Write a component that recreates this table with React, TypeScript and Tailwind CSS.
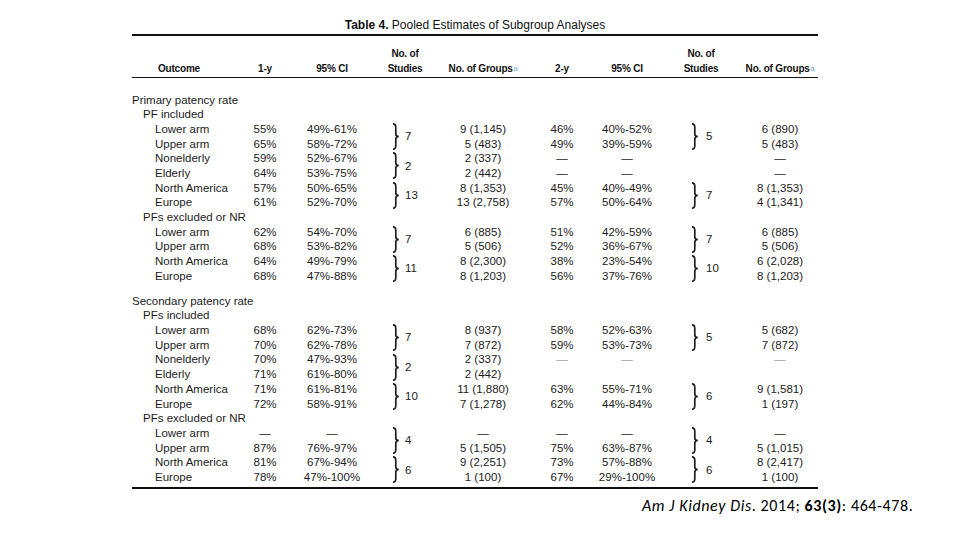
import React from "react";

type Row = { label: string; v: string[]; light?: boolean };
type PairT = { a: Row; b: Row; n1?: string; n2?: string };

const COLS = "grid grid-cols-[108px_50px_84px_62px_94px_64px_66px_82px_76px]";

const Brace = () => (
  <svg width="8" height="27" viewBox="0 0 8 27" className="shrink-0">
    <path
      d="M1 0.8 C3.6 0.8 3.8 2.2 3.8 4.5 L3.8 11 C3.8 12.5 4.6 13.4 6.8 13.5 C4.6 13.6 3.8 14.5 3.8 16 L3.8 22.5 C3.8 24.8 3.6 26.2 1 26.2"
      fill="none"
      stroke="#1f1f1f"
      strokeWidth="1.7"
    />
  </svg>
);

function Cell({ t, light }: { t: string; light?: boolean }) {
  const isDash = t === "—";
  return (
    <div className={`text-center whitespace-nowrap ${isDash && light ? "text-[#a0a0a0]" : ""}`}>{t}</div>
  );
}

function Pair({ p }: { p: PairT }) {
  const { a, b, n1, n2 } = p;
  return (
    <div className={`${COLS} auto-rows-[14.7px] leading-[14.7px]`}>
      <div className="pl-[23px] whitespace-nowrap">{a.label}</div>
      <Cell t={a.v[0]} />
      <Cell t={a.v[1]} />
      <div className="row-span-2 flex items-center pl-[18px]">
        {n1 && (
          <>
            <Brace />
            <span className="ml-[5px]">{n1}</span>
          </>
        )}
      </div>
      <Cell t={a.v[2]} />
      <Cell t={a.v[3]} light={a.light} />
      <Cell t={a.v[4]} light={a.light} />
      <div className="row-span-2 flex items-center pl-[31px]">
        {n2 && (
          <>
            <Brace />
            <span className="ml-[7px]">{n2}</span>
          </>
        )}
      </div>
      <Cell t={a.v[5]} light={a.light} />

      <div className="pl-[23px] whitespace-nowrap">{b.label}</div>
      <Cell t={b.v[0]} />
      <Cell t={b.v[1]} />
      <Cell t={b.v[2]} />
      <Cell t={b.v[3]} light={b.light} />
      <Cell t={b.v[4]} light={b.light} />
      <Cell t={b.v[5]} light={b.light} />
    </div>
  );
}

const D = "—";

const primaryIncl: PairT[] = [
  {
    a: { label: "Lower arm", v: ["55%", "49%-61%", "9 (1,145)", "46%", "40%-52%", "6 (890)"] },
    b: { label: "Upper arm", v: ["65%", "58%-72%", "5 (483)", "49%", "39%-59%", "5 (483)"] },
    n1: "7",
    n2: "5",
  },
  {
    a: { label: "Nonelderly", v: ["59%", "52%-67%", "2 (337)", D, D, D] },
    b: { label: "Elderly", v: ["64%", "53%-75%", "2 (442)", D, D, D] },
    n1: "2",
  },
  {
    a: { label: "North America", v: ["57%", "50%-65%", "8 (1,353)", "45%", "40%-49%", "8 (1,353)"] },
    b: { label: "Europe", v: ["61%", "52%-70%", "13 (2,758)", "57%", "50%-64%", "4 (1,341)"] },
    n1: "13",
    n2: "7",
  },
];

const primaryExcl: PairT[] = [
  {
    a: { label: "Lower arm", v: ["62%", "54%-70%", "6 (885)", "51%", "42%-59%", "6 (885)"] },
    b: { label: "Upper arm", v: ["68%", "53%-82%", "5 (506)", "52%", "36%-67%", "5 (506)"] },
    n1: "7",
    n2: "7",
  },
  {
    a: { label: "North America", v: ["64%", "49%-79%", "8 (2,300)", "38%", "23%-54%", "6 (2,028)"] },
    b: { label: "Europe", v: ["68%", "47%-88%", "8 (1,203)", "56%", "37%-76%", "8 (1,203)"] },
    n1: "11",
    n2: "10",
  },
];

const secondaryIncl: PairT[] = [
  {
    a: { label: "Lower arm", v: ["68%", "62%-73%", "8 (937)", "58%", "52%-63%", "5 (682)"] },
    b: { label: "Upper arm", v: ["70%", "62%-78%", "7 (872)", "59%", "53%-73%", "7 (872)"] },
    n1: "7",
    n2: "5",
  },
  {
    a: { label: "Nonelderly", v: ["70%", "47%-93%", "2 (337)", D, D, D], light: true },
    b: { label: "Elderly", v: ["71%", "61%-80%", "2 (442)", "", "", ""] },
    n1: "2",
  },
  {
    a: { label: "North America", v: ["71%", "61%-81%", "11 (1,880)", "63%", "55%-71%", "9 (1,581)"] },
    b: { label: "Europe", v: ["72%", "58%-91%", "7 (1,278)", "62%", "44%-84%", "1 (197)"] },
    n1: "10",
    n2: "6",
  },
];

const secondaryExcl: PairT[] = [
  {
    a: { label: "Lower arm", v: [D, D, D, D, D, D] },
    b: { label: "Upper arm", v: ["87%", "76%-97%", "5 (1,505)", "75%", "63%-87%", "5 (1,015)"] },
    n1: "4",
    n2: "4",
  },
  {
    a: { label: "North America", v: ["81%", "67%-94%", "9 (2,251)", "73%", "57%-88%", "8 (2,417)"] },
    b: { label: "Europe", v: ["78%", "47%-100%", "1 (100)", "67%", "29%-100%", "1 (100)"] },
    n1: "6",
    n2: "6",
  },
];

function Label({ t, indent }: { t: string; indent: 0 | 1 }) {
  return (
    <div className={`h-[14.7px] leading-[14.7px] whitespace-nowrap ${indent ? "pl-[11px]" : ""}`}>{t}</div>
  );
}

function Sup() {
  return <sup className="text-[7px] text-[#5b9fc9] font-normal ml-[1px] relative -top-[1px]">a</sup>;
}

export default function App() {
  return (
    <div className="w-[960px] h-[540px] bg-white overflow-hidden text-[#1c1c1c] font-['Liberation_Sans',Arial,sans-serif]">
      <div className="ml-[132px] w-[686px] pt-[18px] h-[34px] text-center text-[12px] leading-[14px] text-[#111]">
        <span className="font-bold">Table 4.</span>
        <span> Pooled Estimates of Subgroup Analyses</span>
      </div>
      <div className="ml-[132px] w-[686px]">
        <div className="h-[2px] bg-[#111]" />
        <div className={`${COLS} items-end pt-[10px] pb-[1px] text-[10px] font-bold leading-[15px] tracking-[-0.2px] text-[#111]`}>
          <div className="pl-[26px]">Outcome</div>
          <div className="text-center">1-y</div>
          <div className="text-center">95% CI</div>
          <div className="text-center">
            No. of
            <br />
            Studies
          </div>
          <div className="flex justify-center whitespace-nowrap">
            <span>
              No. of Groups
              <Sup />
            </span>
          </div>
          <div className="text-center">2-y</div>
          <div className="text-center">95% CI</div>
          <div className="text-center">
            No. of
            <br />
            Studies
          </div>
          <div className="flex justify-center whitespace-nowrap">
            <span>
              No. of Groups
              <Sup />
            </span>
          </div>
        </div>
        <div className="h-px bg-[#111]" />

        <div className="pt-[14.5px] text-[11.5px]">
          <Label t="Primary patency rate" indent={0} />
          <Label t="PF included" indent={1} />
          {primaryIncl.map((p, i) => (
            <Pair key={"a" + i} p={p} />
          ))}
          <Label t="PFs excluded or NR" indent={1} />
          {primaryExcl.map((p, i) => (
            <Pair key={"b" + i} p={p} />
          ))}
          <div className="h-[10.3px]" />
          <Label t="Secondary patency rate" indent={0} />
          <Label t="PFs included" indent={1} />
          {secondaryIncl.map((p, i) => (
            <Pair key={"c" + i} p={p} />
          ))}
          <Label t="PFs excluded or NR" indent={1} />
          {secondaryExcl.map((p, i) => (
            <Pair key={"d" + i} p={p} />
          ))}
        </div>
        <div className="mt-[2.5px] h-[1.5px] bg-[#111]" />
      </div>
      <div className="ml-[642px] mt-[8px] text-[16px] leading-[18px] tracking-[0.6px] text-black whitespace-nowrap font-['Carlito','Liberation_Sans',sans-serif]">
        <i>Am J Kidney Dis</i>. 2014; <b>63(3)</b>: 464-478.
      </div>
    </div>
  );
}
